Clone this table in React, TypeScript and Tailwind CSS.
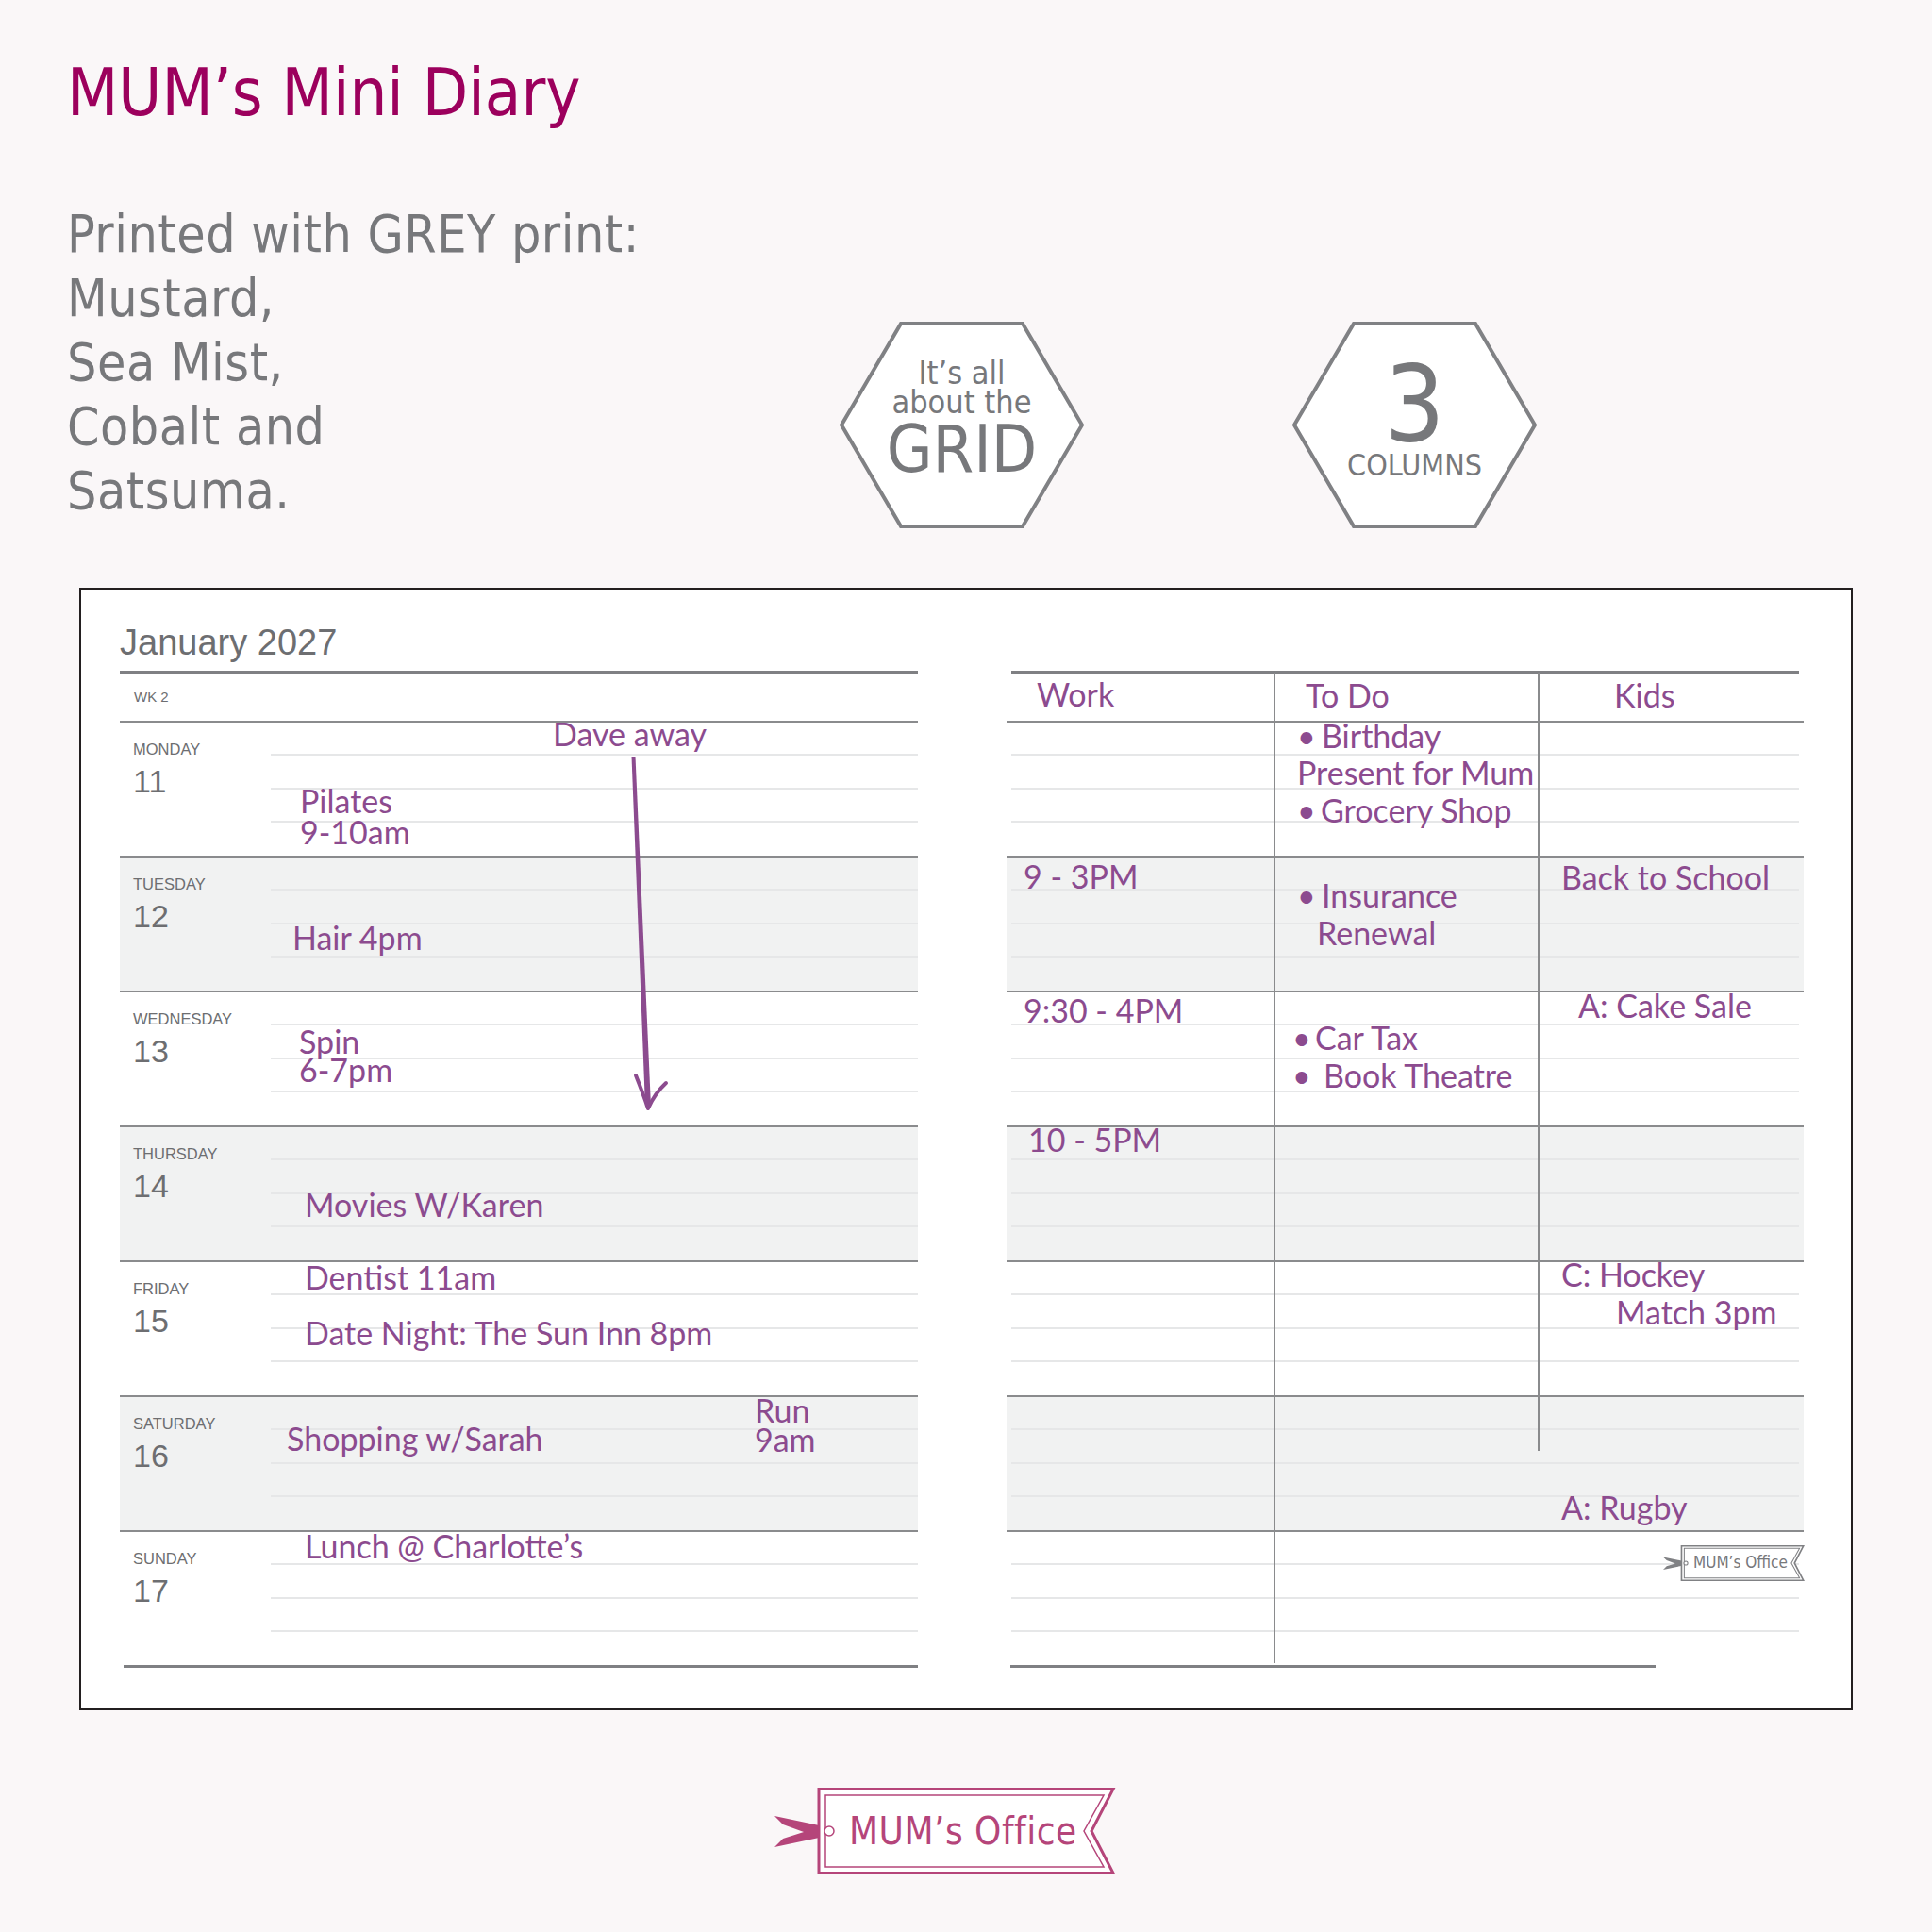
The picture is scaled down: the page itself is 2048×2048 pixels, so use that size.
import React from 'react';

// Diary page sample: heading, two hexagon badges, a week-to-view spread and the tag logo.

const DIN = "font-['DejaVu_Sans_Condensed','DejaVu_Sans',sans-serif]";
const HAND = "font-['Lato','Open_Sans',sans-serif]";

const days = [
  { name: 'MONDAY', num: 11, shaded: false },
  { name: 'TUESDAY', num: 12, shaded: true },
  { name: 'WEDNESDAY', num: 13, shaded: false },
  { name: 'THURSDAY', num: 14, shaded: true },
  { name: 'FRIDAY', num: 15, shaded: false },
  { name: 'SATURDAY', num: 16, shaded: true },
  { name: 'SUNDAY', num: 17, shaded: false },
];

interface Note {
  text: string;
  left: number;
  top: number;
  bullet?: number;
}

// left/top are relative to the inside of the diary box
const notes: Note[] = [
  { text: 'Dave away', left: 500, top: 133 },
  { text: 'Pilates', left: 232, top: 204 },
  { text: '9-10am', left: 232, top: 237 },
  { text: 'Hair 4pm', left: 224, top: 349 },
  { text: 'Spin', left: 231, top: 459 },
  { text: '6-7pm', left: 231, top: 489 },
  { text: 'Movies W/Karen', left: 237, top: 632 },
  { text: 'Dentist 11am', left: 237, top: 709 },
  { text: 'Date Night: The Sun Inn 8pm', left: 237, top: 768 },
  { text: 'Shopping w/Sarah', left: 218, top: 880 },
  { text: 'Run', left: 714, top: 850 },
  { text: '9am', left: 714, top: 881 },
  { text: 'Lunch @ Charlotte’s', left: 237, top: 994 },
  { text: 'Work', left: 1013, top: 91 },
  { text: 'To Do', left: 1298, top: 92 },
  { text: 'Kids', left: 1625, top: 92 },
  { text: 'Birthday', left: 1289, top: 135, bullet: 26 },
  { text: 'Present for Mum', left: 1289, top: 174 },
  { text: 'Grocery Shop', left: 1289, top: 214, bullet: 25 },
  { text: '9 - 3PM', left: 999, top: 284 },
  { text: 'Insurance', left: 1289, top: 304, bullet: 26 },
  { text: 'Renewal', left: 1310, top: 344 },
  { text: 'Back to School', left: 1569, top: 285 },
  { text: '9:30 - 4PM', left: 999, top: 426 },
  { text: 'A: Cake Sale', left: 1587, top: 421 },
  { text: 'Car Tax', left: 1284, top: 455, bullet: 24 },
  { text: 'Book Theatre', left: 1284, top: 495, bullet: 33 },
  { text: '10 - 5PM', left: 1004, top: 563 },
  { text: 'C: Hockey', left: 1569, top: 706 },
  { text: 'Match 3pm', left: 1627, top: 746 },
  { text: 'A: Rugby', left: 1569, top: 953 },
];

function Hexagon({ children }: { children: React.ReactNode }) {
  return (
    <div className="relative w-[259px] h-[219px] flex flex-col items-center">
      <svg className="absolute inset-0" width="259" height="219" viewBox="0 0 259 219">
        <polygon
          points="2,109.5 65,2 194,2 257,109.5 194,217 65,217"
          fill="#ffffff"
          stroke="#808184"
          strokeWidth="4"
        />
      </svg>
      <div className={`relative flex flex-col items-center text-[#77787b] ${DIN}`}>{children}</div>
    </div>
  );
}

interface TagProps {
  size: string;
  pad: string;
  text: string;
  color: string;
  outer: number;
  inner: number;
}

function Tag({ size, pad, text, color, outer, inner }: TagProps) {
  return (
    <div className={`relative flex items-center ${size} ${pad}`}>
      <svg className="absolute inset-0 w-full h-full" viewBox="0 0 362 92" preserveAspectRatio="none">
        <polygon points="0,30 52,41 52,52 0,63 9,54 31,47 9,39" fill={color} />
        <path d="M47,1.5 H359 L336,46 L359,90.5 H47 Z" fill="#ffffff" stroke={color} strokeWidth={outer} />
        <path d="M54,8 H349 L328,46 L349,84 H54 Z" fill="none" stroke={color} strokeWidth={inner} />
        <circle cx="58" cy="46" r="5" fill="#ffffff" stroke={color} strokeWidth={inner} />
      </svg>
      <span className={`relative whitespace-nowrap ${text} ${DIN}`}>MUM’s Office</span>
    </div>
  );
}

function LeftPage() {
  return (
    <div className="ml-[41px] w-[846px] pt-[34px] flex flex-col">
      <div className="h-[44px] text-[38px] leading-[44px] text-[#6d6e71]">January 2027</div>
      <div className="mt-[8px] h-[3px] bg-[#7f8083]" />
      <div className="h-[50px] flex items-center pl-[15px] text-[15px] text-[#6d6e71]">WK 2</div>
      {days.map((d) => (
        <div
          key={d.name}
          className={`flex h-[143px] border-t-2 border-[#8a8b8d] ${d.shaded ? 'bg-[#f1f2f2]' : 'bg-white'}`}
        >
          <div className="w-[160px] pl-[14px] pt-[18px] flex flex-col text-[#6d6e71]">
            <span className="text-[16.5px] leading-[20px]">{d.name}</span>
            <span className="mt-[6px] text-[34px] leading-[36px]">{d.num}</span>
          </div>
          <div className="flex-1 grid grid-rows-4">
            <div className="border-b-2 border-[#e6e7e8]" />
            <div className="border-b-2 border-[#e6e7e8]" />
            <div className="border-b-2 border-[#e6e7e8]" />
            <div />
          </div>
        </div>
      ))}
      <div className="ml-[4px] h-[3px] bg-[#7f8083]" />
    </div>
  );
}

function RightPage() {
  return (
    <div className="relative ml-[94px] w-[845px] pt-[34px] flex flex-col">
      <div className="h-[44px]" />
      <div className="mt-[8px] mx-[5px] h-[3px] bg-[#7f8083]" />
      <div className="h-[50px]" />
      {days.map((d) => (
        <div
          key={d.name}
          className={`h-[143px] border-t-2 border-[#8a8b8d] grid grid-rows-4 ${d.shaded ? 'bg-[#f1f2f2]' : 'bg-white'}`}
        >
          <div className="mx-[5px] border-b-2 border-[#e6e7e8]" />
          <div className="mx-[5px] border-b-2 border-[#e6e7e8]" />
          <div className="mx-[5px] border-b-2 border-[#e6e7e8]" />
          <div />
        </div>
      ))}
      <div className="ml-[4px] w-[684px] h-[3px] bg-[#7f8083]" />

      {/* column rules */}
      <div className="absolute left-[283px] top-[88px] w-[1.5px] h-[1050px] bg-[#8a8b8d]" />
      <div className="absolute left-[563px] top-[88px] w-[1.5px] h-[825px] bg-[#8a8b8d]" />
    </div>
  );
}

export default function App() {
  return (
    <div className="w-[2048px] h-[2048px] bg-[#faf7f8] overflow-hidden flex flex-col font-['Liberation_Sans',Arial,sans-serif]">
      {/* Heading and badges */}
      <div className="flex h-[623px]">
        <div className={`w-[890px] pl-[71px] pt-[58px] flex flex-col ${DIN}`}>
          <h1 className="text-[70px] leading-[80px] text-[#9c005d] font-medium">MUM’s Mini Diary</h1>
          <div className="mt-[76px] text-[55px] leading-[68px] text-[#77787b] tracking-[0.5px]">
            <div>Printed with GREY print:</div>
            <div>Mustard,</div>
            <div>Sea Mist,</div>
            <div>Cobalt and</div>
            <div>Satsuma.</div>
          </div>
        </div>
        <div className="flex gap-[221px] pt-[341px]">
          <Hexagon>
            <span className="mt-[39px] text-[34px] leading-[31px]">It’s all</span>
            <span className="text-[34px] leading-[31px]">about the</span>
            <span className="mt-[4px] text-[70px] leading-[60px]">GRID</span>
          </Hexagon>
          <Hexagon>
            <span className="mt-[42px] text-[112px] leading-[90px]">3</span>
            <span className="mt-[5px] text-[32px] leading-[30px]">COLUMNS</span>
          </Hexagon>
        </div>
      </div>

      {/* Diary spread */}
      <div className="relative ml-[84px] w-[1880px] h-[1190px] border-2 border-[#231f20] bg-white flex">
        <LeftPage />
        <RightPage />

        {notes.map((n) => (
          <div
            key={n.text}
            className={`absolute whitespace-nowrap text-[34px] leading-[40px] text-[#8c4b8f] ${HAND}`}
            style={{ left: n.left, top: n.top }}
          >
            {n.bullet && (
              <span className="inline-block" style={{ width: n.bullet }}>
                •
              </span>
            )}
            {n.text}
          </div>
        ))}

        {/* Dave away arrow */}
        <svg
          className="absolute left-[570px] top-[170px]"
          width="60"
          height="390"
          viewBox="570 170 60 390"
        >
          <polygon points="583.5,177 587.5,177 604,548 598,548" fill="#8c4b8f" />
          <path
            d="M588,515 Q596,535 601,550 Q608,534 620,523"
            fill="none"
            stroke="#8c4b8f"
            strokeWidth="4"
            strokeLinecap="round"
            strokeLinejoin="round"
          />
        </svg>

        <div className="absolute left-[1677px] top-[1013px]">
          <Tag
            size="w-[150px] h-[38px]"
            pad="pl-[32px]"
            text="text-[17px] text-[#77787b]"
            color="#808184"
            outer={4}
            inner={2.5}
          />
        </div>
      </div>

      {/* Logo tag */}
      <div className="ml-[821px] mt-[82px]">
        <Tag
          size="w-[362px] h-[92px]"
          pad="pl-[79px]"
          text="text-[40px] text-[#b5457a] tracking-[0.5px]"
          color="#b5457a"
          outer={3}
          inner={1.5}
        />
      </div>
    </div>
  );
}
